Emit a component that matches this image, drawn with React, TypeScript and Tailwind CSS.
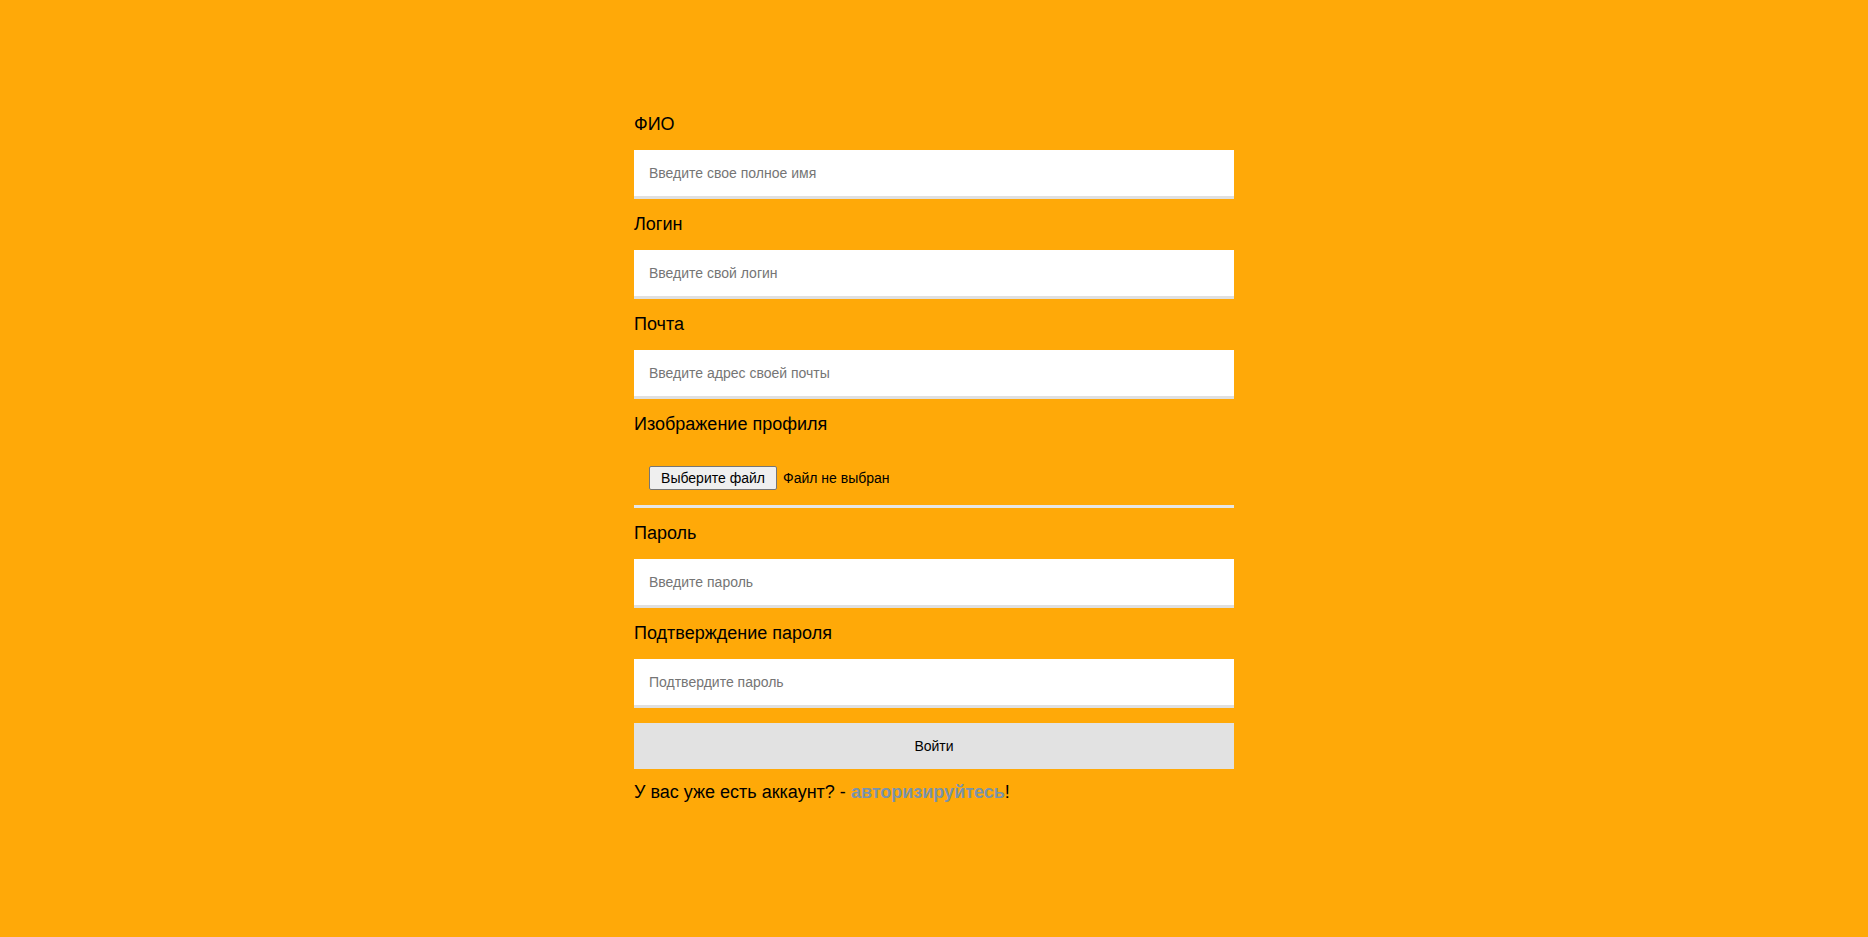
import React from 'react'

const fields = [
  { label: 'ФИО', placeholder: 'Введите свое полное имя', type: 'text' },
  { label: 'Логин', placeholder: 'Введите свой логин', type: 'text' },
  { label: 'Почта', placeholder: 'Введите адрес своей почты', type: 'email' },
]

const passwords = [
  { label: 'Пароль', placeholder: 'Введите пароль' },
  { label: 'Подтверждение пароля', placeholder: 'Подтвердите пароль' },
]

const inputCls =
  'block w-full bg-white px-[15px] py-[15px] text-[14px] leading-[16px] text-black placeholder:text-[#757575] border-b-[3px] border-[#e0e0e0] outline-none mb-[14px]'

const labelCls = 'block pt-px text-[18px] leading-[21px] text-black mb-[15px]'

export default function App() {
  return (
    <div className="min-h-screen w-full bg-[#ffa908] font-['Liberation_Sans',Arial,sans-serif]">
      <form className="mx-auto w-[600px] pt-[113px] pb-16" onSubmit={(e) => e.preventDefault()}>
        {fields.map((f) => (
          <div key={f.label}>
            <label className={labelCls}>{f.label}</label>
            <input type={f.type} placeholder={f.placeholder} className={inputCls} />
          </div>
        ))}

        {/* file picker */}
        <label className={labelCls}>Изображение профиля</label>
        <div className="flex h-[58px] items-center gap-[6px] px-[15px] pt-px border-b-[3px] border-[#e6e6e6] mb-[14px]">
          <button
            type="button"
            className="h-[24px] w-[128px] rounded-[2px] border border-[#767676] bg-[#efefef] text-[14px] leading-[16px] text-black"
          >
            Выберите файл
          </button>
          <span className="text-[14px] leading-[16px] text-black">Файл не выбран</span>
        </div>

        {passwords.map((f) => (
          <div key={f.label}>
            <label className={labelCls}>{f.label}</label>
            <input type="password" placeholder={f.placeholder} className={inputCls} />
          </div>
        ))}

        <button
          type="submit"
          className="mt-[15px] block h-[46px] w-full bg-[#e2e2e2] text-[14px] leading-[16px] text-black mb-[13px]"
        >
          Войти
        </button>

        <p className="text-[18px] leading-[21px] text-black">
          У вас уже есть аккаунт? -{' '}
          <a href="#" className="font-bold text-[#7a93ab]">
            авторизируйтесь
          </a>
          !
        </p>
      </form>
    </div>
  )
}
